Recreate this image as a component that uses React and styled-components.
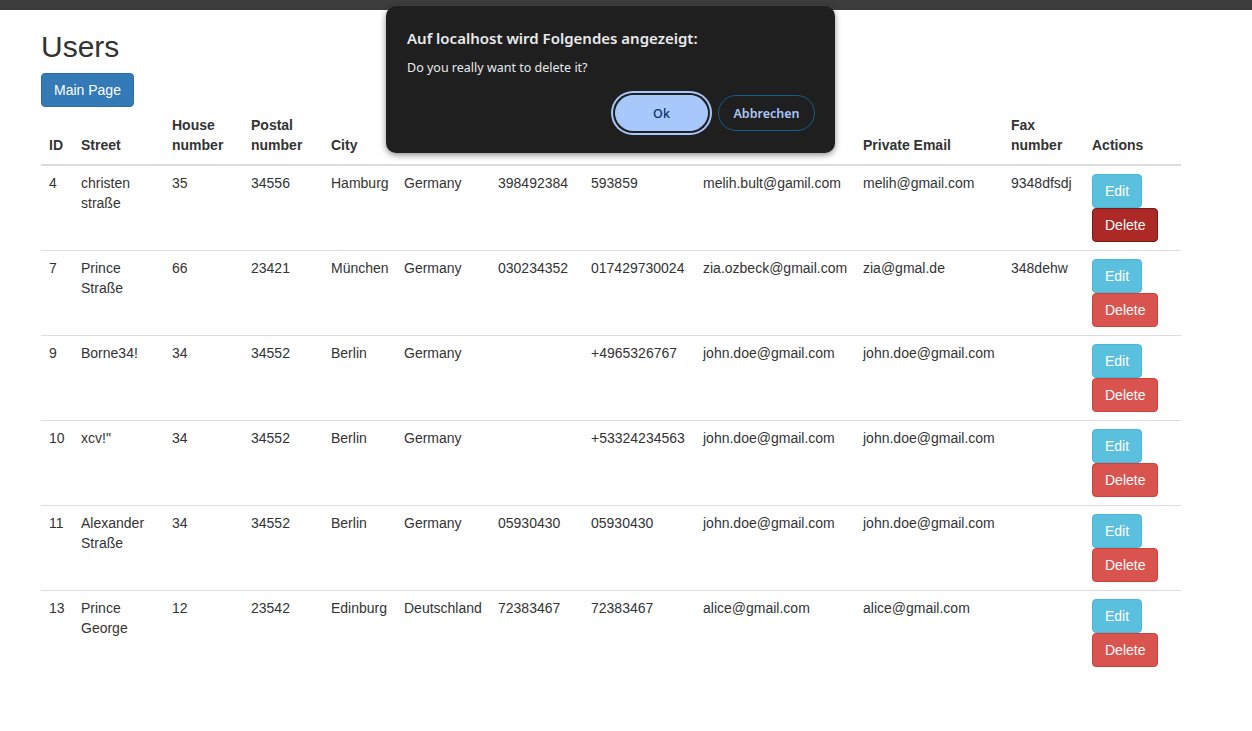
import React from 'react';
import styled, { createGlobalStyle } from 'styled-components';

const GlobalStyle = createGlobalStyle`
    * {
        box-sizing: border-box;
    }
    body {
        margin: 0;
        background: #fff;
        font-family: "Liberation Sans", Arial, Helvetica, sans-serif;
        font-size: 14px;
        line-height: 1.42857;
        color: #333;
    }
`;

const Screen = styled.div`
    position: relative;
`;

const TopBar = styled.div`
    height: 10px;
    background: #3c3c3c;
`;

const Page = styled.div`
    padding: 0 41px;
`;

const Title = styled.h2`
    margin: 20px 0 10px;
    font-size: 30px;
    font-weight: 500;
    line-height: 1.1;
`;

const Button = styled.button`
    display: inline-block;
    padding: 6px 12px;
    font-family: inherit;
    font-size: 14px;
    line-height: 20px;
    border: 1px solid ${(p) => p.$border};
    border-radius: 4px;
    background: ${(p) => p.$bg};
    color: #fff;
    cursor: pointer;
`;

const Table = styled.table`
    width: 1140px;
    margin-top: 1px;
    table-layout: fixed;
    border-collapse: collapse;
    border-spacing: 0;
`;

const Th = styled.th`
    padding: 8px;
    text-align: left;
    vertical-align: bottom;
    font-weight: bold;
    border-bottom: 2px solid #ddd;
`;

const Td = styled.td`
    padding: 8px;
    vertical-align: top;
    border-top: ${(p) => (p.$first ? 'none' : '1px solid #ddd')};
`;

const Actions = styled.div`
    display: flex;
    flex-direction: column;
    align-items: flex-start;
`;

const Dialog = styled.div`
    position: absolute;
    top: 6px;
    left: 386px;
    width: 449px;
    height: 147px;
    padding: 22px 20px 22px 21px;
    background: #1f1f1f;
    border-radius: 10px;
    box-shadow: 0 2px 6px rgba(0, 0, 0, 0.45), 0 0 0 1px rgba(255, 255, 255, 0.04);
    font-family: "Noto Sans", "Open Sans", sans-serif;
    color: #e8eaed;
    display: flex;
    flex-direction: column;
`;

const DialogTitle = styled.div`
    font-size: 15px;
    font-weight: 600;
    line-height: 20px;
    margin-bottom: 11px;
`;

const DialogText = styled.div`
    font-size: 12.5px;
    line-height: 18px;
`;

const DialogButtons = styled.div`
    margin-top: auto;
    display: flex;
    justify-content: flex-end;
    gap: 10px;
`;

const PillButton = styled.button`
    height: 36px;
    min-width: ${(p) => (p.$primary ? '93px' : '97px')};
    padding: 0 14px;
    border-radius: 18px;
    font-family: "Noto Sans", "Open Sans", sans-serif;
    font-size: 12.5px;
    font-weight: ${(p) => (p.$primary ? 500 : 600)};
    border: 1px solid ${(p) => (p.$primary ? '#a8c7fa' : '#145d8c')};
    background: ${(p) => (p.$primary ? '#a8c7fa' : 'transparent')};
    color: ${(p) => (p.$primary ? '#062e6f' : '#a8c7fa')};
    box-shadow: ${(p) => (p.$primary ? '0 0 0 2px #1f1f1f, 0 0 0 4px #a8c7fa' : 'none')};
`;

const columns = [
    { label: 'ID', width: 32 },
    { label: 'Street', width: 91 },
    { label: 'House number', width: 79 },
    { label: 'Postal number', width: 80 },
    { label: 'City', width: 73 },
    { label: 'Country', width: 94 },
    { label: 'Phone number', width: 93 },
    { label: 'Mobile number', width: 112 },
    { label: 'Business Email', width: 160 },
    { label: 'Private Email', width: 148 },
    { label: 'Fax number', width: 81 },
    { label: 'Actions', width: 97 },
];

const users = [
    ['4', 'christen straße', '35', '34556', 'Hamburg', 'Germany', '398492384', '593859', 'melih.bult@gamil.com', 'melih@gmail.com', '9348dfsdj'],
    ['7', 'Prince Straße', '66', '23421', 'München', 'Germany', '030234352', '017429730024', 'zia.ozbeck@gmail.com', 'zia@gmal.de', '348dehw'],
    ['9', 'Borne34!', '34', '34552', 'Berlin', 'Germany', '', '+4965326767', 'john.doe@gmail.com', 'john.doe@gmail.com', ''],
    ['10', 'xcv!"', '34', '34552', 'Berlin', 'Germany', '', '+53324234563', 'john.doe@gmail.com', 'john.doe@gmail.com', ''],
    ['11', 'Alexander Straße', '34', '34552', 'Berlin', 'Germany', '05930430', '05930430', 'john.doe@gmail.com', 'john.doe@gmail.com', ''],
    ['13', 'Prince George', '12', '23542', 'Edinburg', 'Deutschland', '72383467', '72383467', 'alice@gmail.com', 'alice@gmail.com', ''],
];

const App = () => {
    return (
        <Screen>
            <GlobalStyle />
            <TopBar />
            <Page>
                <Title>Users</Title>
                <Button $bg="#337ab7" $border="#2e6da4">Main Page</Button>
                <Table>
                    <colgroup>
                        {columns.map((c) => (
                            <col key={c.label} width={c.width} />
                        ))}
                    </colgroup>
                    <thead>
                        <tr>
                            {columns.map((c) => (
                                <Th key={c.label}>{c.label}</Th>
                            ))}
                        </tr>
                    </thead>
                    <tbody>
                        {users.map((u, i) => (
                            <tr key={u[0]}>
                                {u.map((v, j) => (
                                    <Td key={j} $first={i === 0}>{v}</Td>
                                ))}
                                <Td $first={i === 0}>
                                    <Actions>
                                        <Button $bg="#5bc0de" $border="#46b8da">Edit</Button>
                                        {i === 0 ? (
                                            <Button $bg="#ac2925" $border="#761c19">Delete</Button>
                                        ) : (
                                            <Button $bg="#d9534f" $border="#d43f3a">Delete</Button>
                                        )}
                                    </Actions>
                                </Td>
                            </tr>
                        ))}
                    </tbody>
                </Table>
            </Page>
            <Dialog>
                <DialogTitle>Auf localhost wird Folgendes angezeigt:</DialogTitle>
                <DialogText>Do you really want to delete it?</DialogText>
                <DialogButtons>
                    <PillButton $primary>Ok</PillButton>
                    <PillButton>Abbrechen</PillButton>
                </DialogButtons>
            </Dialog>
        </Screen>
    );
};

export default App;
